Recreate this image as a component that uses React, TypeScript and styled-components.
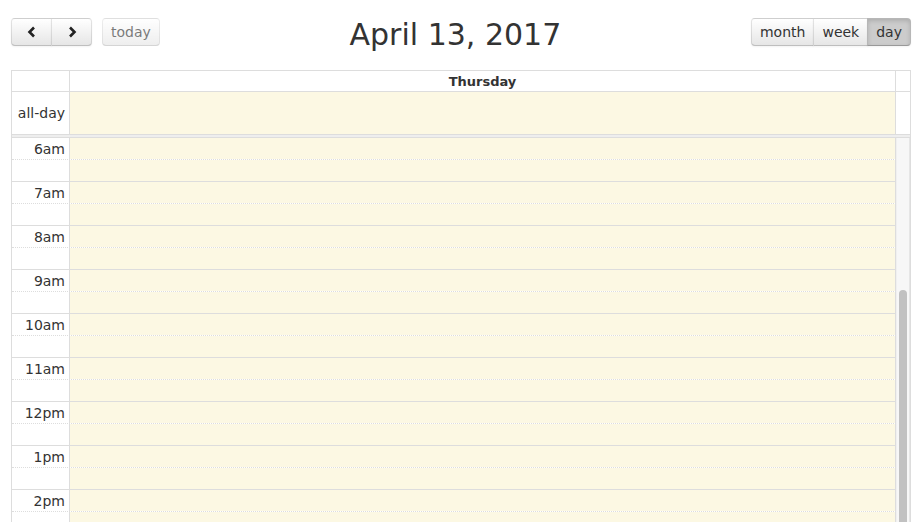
import React from "react";
import styled, { createGlobalStyle, css } from "styled-components";

const Global = createGlobalStyle`
  html, body { margin: 0; padding: 0; overflow: hidden; background: #fff; }
  body { font-family: "DejaVu Sans", "Liberation Sans", sans-serif; font-size: 14px; color: #333; }
`;

const Page = styled.div`
  padding: 18px 7px 0 11px;
`;

const Toolbar = styled.div`
  display: flex;
  align-items: center;
  height: 28px;
  margin-bottom: 24px;
`;

const Side = styled.div`
  display: flex;
  align-items: center;
  gap: 10px;
`;

const Group = styled.div`
  display: flex;
`;

const Title = styled.h2`
  flex: 1;
  margin: 0;
  text-align: center;
  font-size: 30px;
  font-weight: normal;
  color: #333;
  line-height: 28px;
  position: relative;
  top: 3px;
`;

const Button = styled.button<{ $active?: boolean; $disabled?: boolean; $pos?: "left" | "mid" | "right" | "solo" }>`
  height: 28px;
  padding: 0 8px;
  margin: 0;
  font-family: inherit;
  font-size: 14px;
  color: #333;
  background-color: #f5f5f5;
  background-image: linear-gradient(to bottom, #fff, #e6e6e6);
  border: 1px solid;
  border-color: rgba(0,0,0,.1) rgba(0,0,0,.1) rgba(0,0,0,.25);
  box-shadow: inset 0 1px 0 rgba(255,255,255,.2), 0 1px 2px rgba(0,0,0,.05);
  display: flex;
  align-items: center;
  justify-content: center;
  cursor: pointer;
  ${(p) => {
    switch (p.$pos) {
      case "left":
        return css`border-radius: 4px 0 0 4px;`;
      case "mid":
        return css`border-radius: 0; margin-left: -1px;`;
      case "right":
        return css`border-radius: 0 4px 4px 0; margin-left: -1px;`;
      default:
        return css`border-radius: 4px;`;
    }
  }}
  ${(p) =>
    p.$active &&
    css`
      background-color: #ccc;
      background-image: none;
      box-shadow: inset 0 2px 4px rgba(0,0,0,.15), 0 1px 2px rgba(0,0,0,.05);
    `}
  ${(p) =>
    p.$disabled &&
    css`
      opacity: .65;
      box-shadow: none;
      cursor: default;
    `}
`;

const ArrowButton = styled(Button)`
  width: 41px;
`;

const Calendar = styled.div`
  border: 1px solid #ddd;
  width: 898px;
`;

const Row = styled.div<{ $h: number; $line?: "solid" | "dotted" | "none" }>`
  display: flex;
  height: ${(p) => p.$h}px;
  border-bottom: ${(p) => (p.$line === "none" ? "0" : `1px ${p.$line || "solid"} #ddd`)};
`;

const AxisCell = styled.div`
  flex: none;
  width: 58px;
  box-sizing: border-box;
  border-right: 1px solid #ddd;
  padding-right: 4px;
  text-align: right;
  display: flex;
  align-items: center;
  justify-content: flex-end;
  white-space: nowrap;
`;

const DayCell = styled.div<{ $today?: boolean }>`
  flex: 1;
  border-right: 1px solid #ddd;
  background: ${(p) => (p.$today ? "#fcf8e3" : "#fff")};
  display: flex;
  align-items: center;
  justify-content: center;
`;

const HeadLabel = styled.span`
  font-weight: bold;
  font-size: 13px;
`;

const Gutter = styled.div`
  width: 14px;
  flex: none;
`;

const Divider = styled.div`
  height: 2px;
  background: #eee;
  border-top: 1px solid #ddd;
  border-bottom: 1px solid #ddd;
`;

const Body = styled.div`
  display: flex;
  height: 384px;
  overflow: hidden;
`;

const Slots = styled.div`
  flex: 1;
`;

const SlotLabel = styled.span`
  font-size: 14px;
`;

const ScrollTrack = styled.div`
  width: 14px;
  flex: none;
  background: #f7f7f7;
  box-shadow: inset 1px 0 0 #f0f0f0, inset -1px 0 0 #e6e6e6;
  display: flex;
  justify-content: center;
`;

const Thumb = styled.div`
  width: 8px;
  margin-top: 152px;
  background: #c1c1c1;
  border-radius: 4px 4px 0 0;
`;

const Chevron = ({ dir }: { dir: "left" | "right" }) => (
  <svg width="10" height="12" viewBox="0 0 10 12">
    {dir === "left" ? (
      <polyline points="7,1.5 2.5,6 7,10.5" fill="none" stroke="#222" strokeWidth="2.6" />
    ) : (
      <polyline points="3,1.5 7.5,6 3,10.5" fill="none" stroke="#222" strokeWidth="2.6" />
    )}
  </svg>
);

const hours = ["6am", "7am", "8am", "9am", "10am", "11am", "12pm", "1pm", "2pm"];

export default function App() {
  return (
    <>
      <Global />
      <Page>
        <Toolbar>
          <Side>
            <Group>
              <ArrowButton $pos="left"><Chevron dir="left" /></ArrowButton>
              <ArrowButton $pos="right"><Chevron dir="right" /></ArrowButton>
            </Group>
            <Button $pos="solo" $disabled>today</Button>
          </Side>
          <Title>April 13, 2017</Title>
          <Side>
            <Group>
              <Button $pos="left">month</Button>
              <Button $pos="mid">week</Button>
              <Button $pos="right" $active>day</Button>
            </Group>
          </Side>
        </Toolbar>
        <Calendar>
          <Row $h={20}>
            <AxisCell />
            <DayCell><HeadLabel>Thursday</HeadLabel></DayCell>
            <Gutter />
          </Row>
          <Row $h={42} $line="none">
            <AxisCell>all-day</AxisCell>
            <DayCell $today />
            <Gutter />
          </Row>
          <Divider />
          <Body>
            <Slots>
              {hours.map((h) => (
                <React.Fragment key={h}>
                  <Row $h={21} $line="dotted">
                    <AxisCell><SlotLabel>{h}</SlotLabel></AxisCell>
                    <DayCell $today />
                  </Row>
                  <Row $h={21} $line="solid">
                    <AxisCell />
                    <DayCell $today />
                  </Row>
                </React.Fragment>
              ))}
            </Slots>
            <ScrollTrack>
              <Thumb />
            </ScrollTrack>
          </Body>
        </Calendar>
      </Page>
    </>
  );
}
